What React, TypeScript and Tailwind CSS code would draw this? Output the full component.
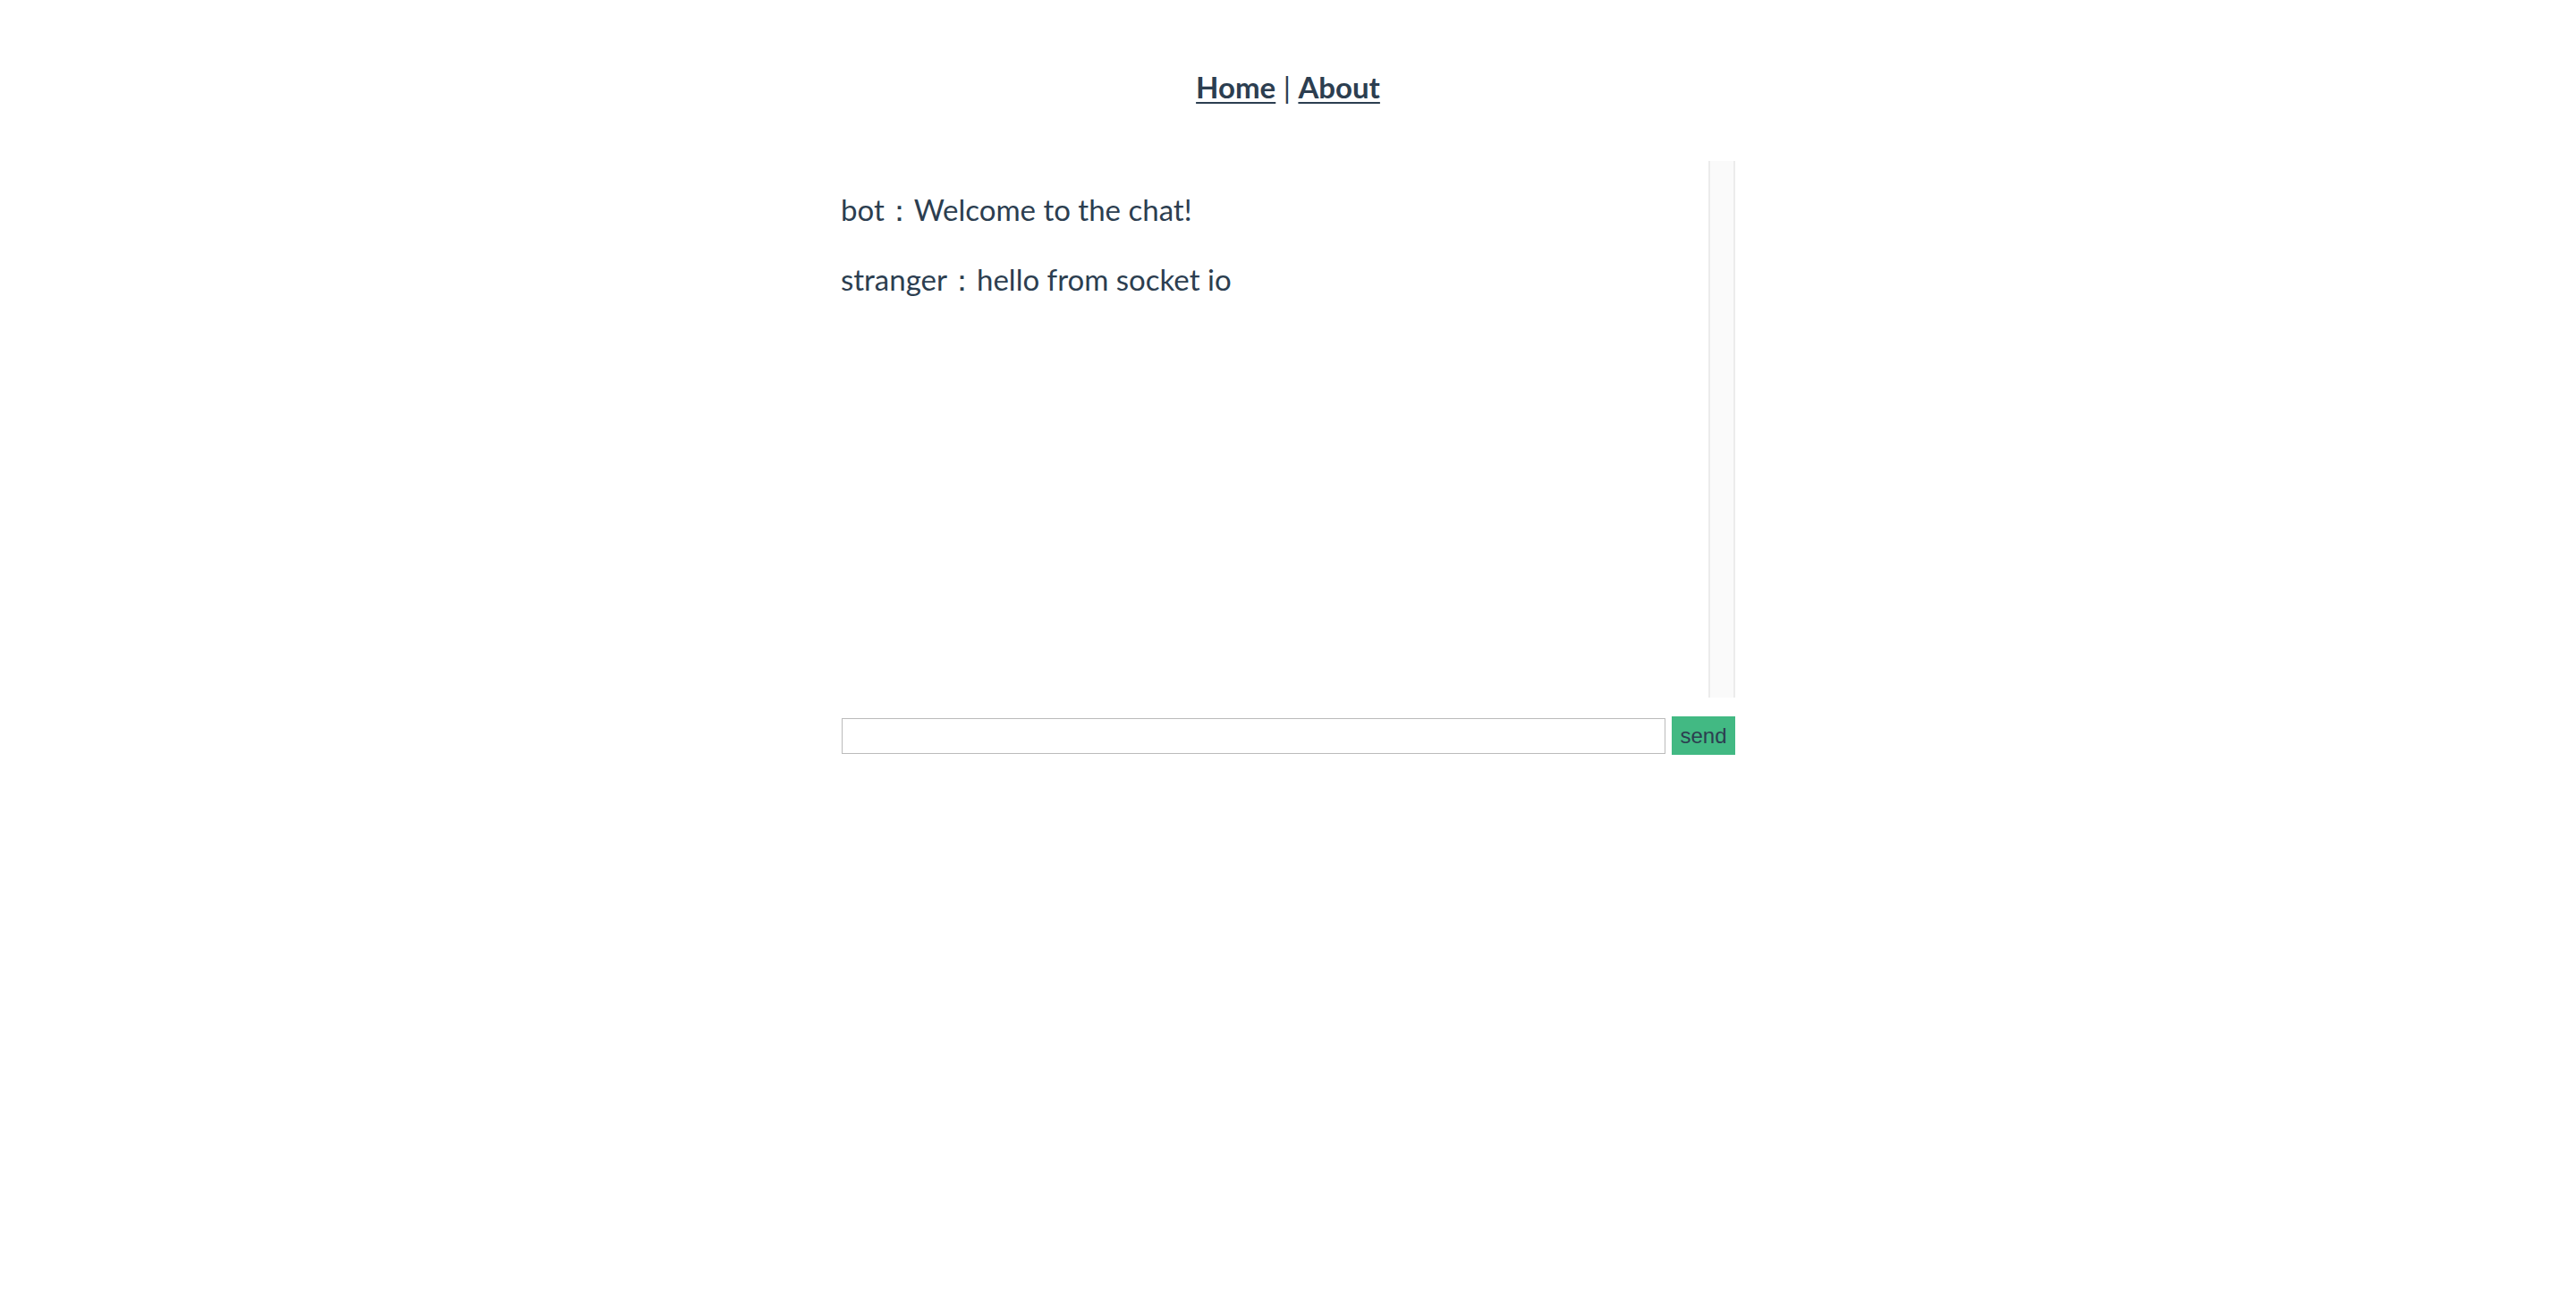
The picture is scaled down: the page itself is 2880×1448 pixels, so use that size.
const messages = [
  { from: "bot", text: "Welcome to the chat!" },
  { from: "stranger", text: "hello from socket io" },
]

export default function App() {
  return (
    <div className="min-h-screen bg-white text-[#2c3e50] font-['Lato','Open_Sans',sans-serif]">
      <nav className="pt-[75px] text-center text-[33px] font-bold leading-[44px]">
        <a href="#" className="underline underline-offset-[4px] decoration-[2px] text-[#2c3e50]">Home</a>
        <span className="font-normal"> | </span>
        <a href="#" className="underline underline-offset-[4px] decoration-[2px] text-[#2c3e50]">About</a>
      </nav>

      <div className="mx-auto mt-[61px] w-[1000px]">
        <div className="flex h-[600px]">
          <div className="flex-1 pt-[32px] flex flex-col gap-[34px]">
            {messages.map((m, i) => (
              <p key={i} className="text-[33px] leading-[44px]">
                {m.from}：{m.text}
              </p>
            ))}
          </div>
          <div className="w-[30px] border-x-[2px] border-[#ececec] bg-[#fafafa]"></div>
        </div>

        <div className="mt-[21px] flex items-center gap-[7px]">
          <input type="text" className="ml-[1px] h-[40px] flex-1 border-[1.5px] border-[#bbbbbb] outline-none px-2 text-[20px]" />
          <button className="h-[43px] w-[71px] bg-[#42b983] text-[24px] text-[#2c3e50] font-['Liberation_Sans',Arial,sans-serif]">send</button>
        </div>
      </div>
    </div>
  )
}
